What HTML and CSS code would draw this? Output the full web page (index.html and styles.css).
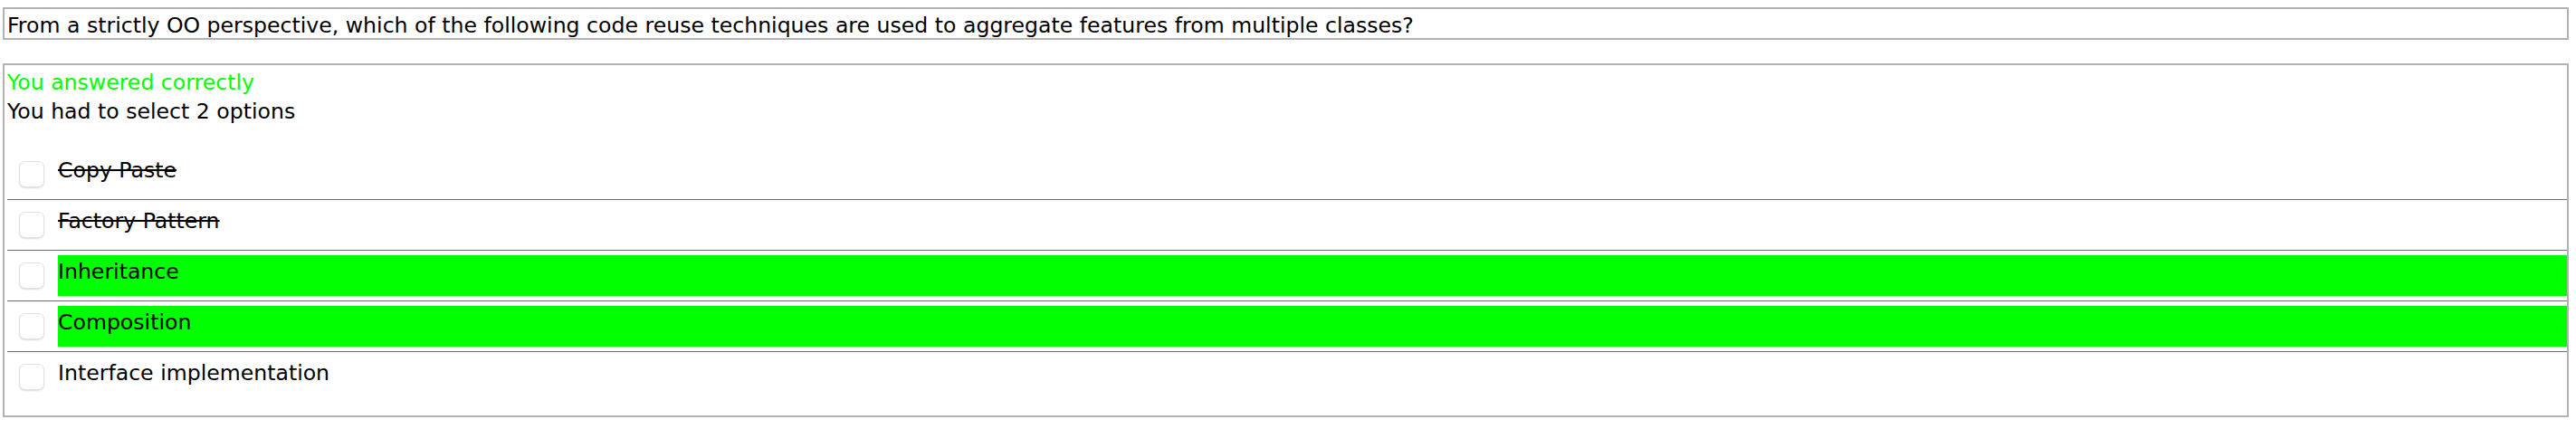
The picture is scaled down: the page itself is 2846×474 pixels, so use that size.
FILE: index.html
```html
<!DOCTYPE html>
<html>
<head>
<meta charset="utf-8">
<link rel="stylesheet" href="styles.css">
</head>
<body>
  <div class="question">From a strictly OO perspective, which of the following code reuse techniques are used to aggregate features from multiple classes?</div>
  <div class="answer-box">
    <div class="result">You answered correctly</div>
    <div class="hint">You had to select 2 options</div>
    <ul class="options">
      <li class="option"><span class="check"></span><span class="label wrong">Copy Paste</span></li>
      <li class="option"><span class="check"></span><span class="label wrong">Factory Pattern</span></li>
      <li class="option"><span class="check"></span><span class="label right">Inheritance</span></li>
      <li class="option"><span class="check"></span><span class="label right">Composition</span></li>
      <li class="option"><span class="check"></span><span class="label">Interface implementation</span></li>
    </ul>
  </div>
</body>
</html>
```
FILE: styles.css
```css
html, body {
  background: #ffffff;
}
body {
  margin: 8px 8px 0 3px;
  font-family: "DejaVu Sans", Verdana, sans-serif;
  font-size: 23.6px;
  color: #000000;
}
.question {
  border: 2px solid #b3b3b3;
  height: 30px;
  line-height: 32px;
  padding: 2px 3px 0;
  white-space: nowrap;
  overflow: hidden;
}
.answer-box {
  margin-top: 26px;
  border: 2px solid #b3b3b3;
  padding: 7px 0 15px 3px;
}
.result {
  color: #00ff00;
  line-height: 24px;
}
.hint {
  line-height: 24px;
  margin-top: 8px;
}
.options {
  list-style: none;
  margin: 30px 0 0 0;
  padding: 0;
}
.option {
  display: flex;
  align-items: center;
  padding: 5px 0;
  border-bottom: 1px solid #6e6e6e;
}
.option:last-child {
  border-bottom: none;
}
.check {
  flex: none;
  width: 26px;
  height: 27px;
  margin-left: 13px;
  margin-right: 15px;
  border: 1px solid #e2e2e2;
  border-radius: 7px;
  background: #ffffff;
  box-shadow: 0 1px 2px rgba(0, 0, 0, 0.14);
}
.label {
  flex: 1;
  display: block;
  height: 26px;
  line-height: 26px;
  padding: 5px 0 14px;
}
.label.wrong {
  text-decoration: line-through;
}
.label.right {
  background: #00ff00;
}
```
